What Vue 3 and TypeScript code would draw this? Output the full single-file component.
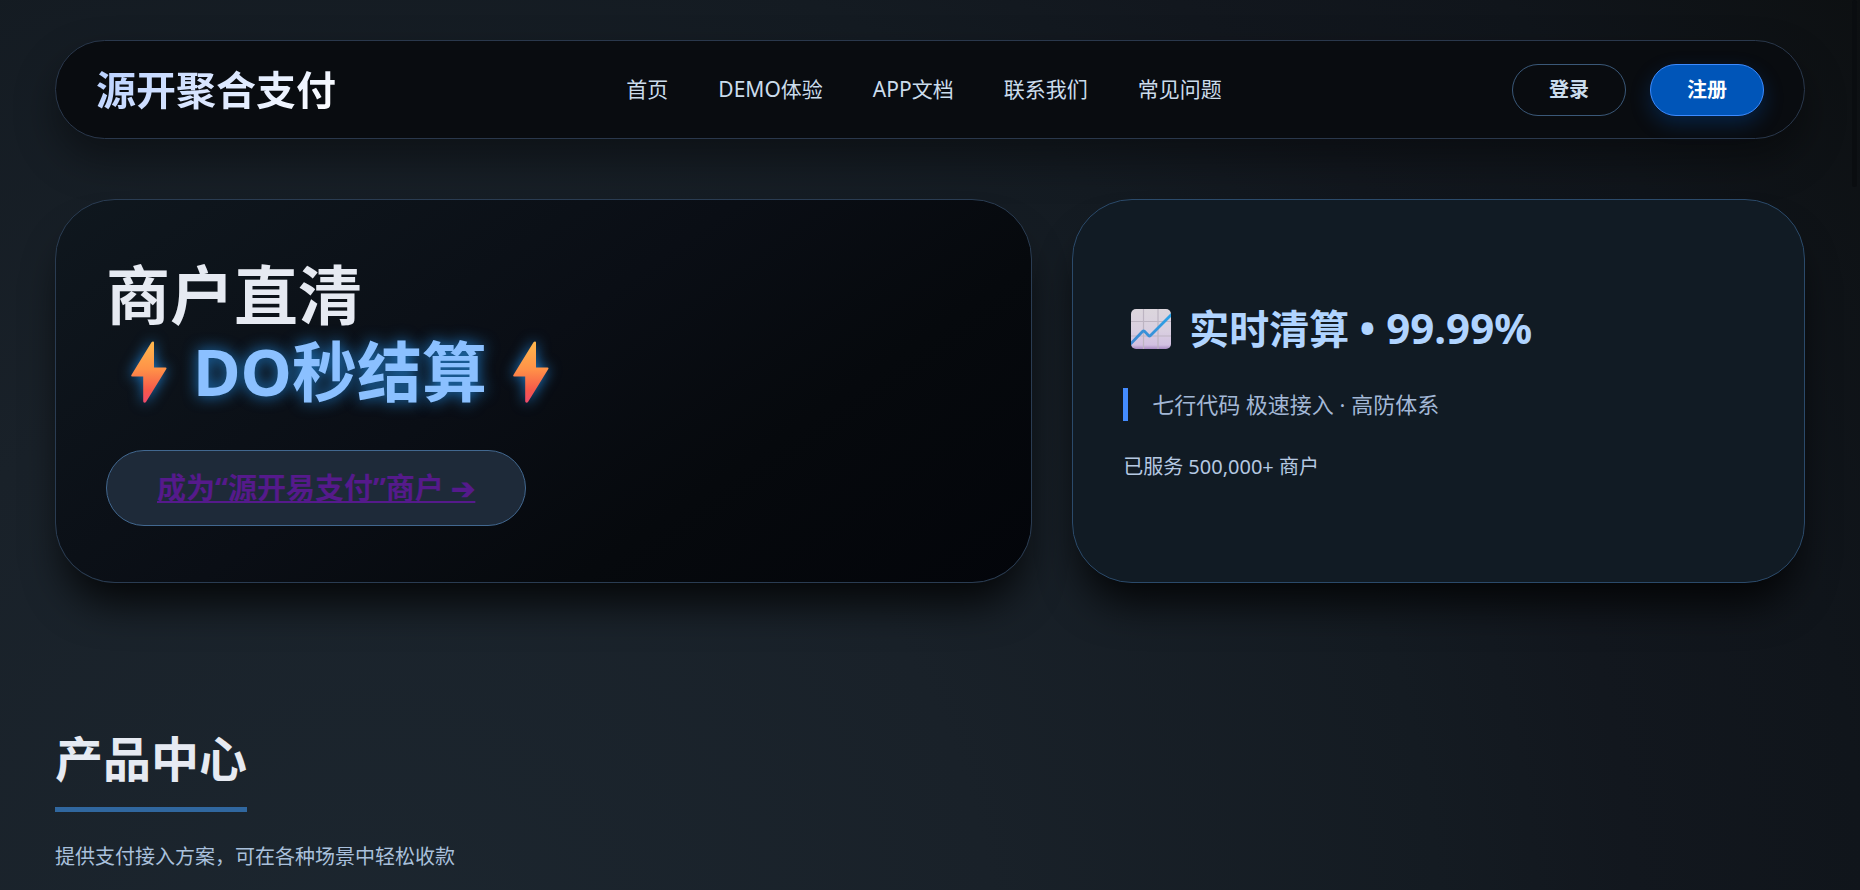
<script setup lang="ts">
interface NavItem {
  label: string
  href: string
}

const navItems: NavItem[] = [
  { label: '首页', href: '#home' },
  { label: 'DEMO体验', href: '#demo' },
  { label: 'APP文档', href: '#docs' },
  { label: '联系我们', href: '#contact' },
  { label: '常见问题', href: '#faq' },
]
</script>

<template>
  <div class="page">
    <header class="topbar">
      <div class="logo">源开聚合支付</div>
      <nav class="nav" aria-label="主导航">
        <a v-for="item in navItems" :key="item.label" class="nav-link" :href="item.href">{{ item.label }}</a>
      </nav>
      <div class="actions">
        <button type="button" class="btn">登录</button>
        <button type="button" class="btn btn-primary">注册</button>
      </div>
    </header>

    <main>
      <section class="hero">
        <div class="card card-main">
          <h1 class="title">
            <span class="title-line">商户直清</span>
            <span class="title-line glow">
              <svg class="bolt" viewBox="0 0 36 62" aria-hidden="true">
                <defs>
                  <linearGradient id="boltFill" x1="0" y1="0" x2="0" y2="1">
                    <stop offset="0" stop-color="#ffb84d" />
                    <stop offset="0.45" stop-color="#ff9248" />
                    <stop offset="0.8" stop-color="#f6584a" />
                    <stop offset="1" stop-color="#ee4a6c" />
                  </linearGradient>
                </defs>
                <path d="M20.500 1.200Q21 .4 22 .4Q23 .4 23 1.600V26.500H34.500Q36 26.500 35.300 28L15 61Q14.500 61.700 13.500 61.700Q12.200 61.700 12.200 60.300V35.500H1Q-.2 35.500 .4 34Z" fill="url(#boltFill)" />
              </svg>
              <span>DO秒结算</span>
              <svg class="bolt" viewBox="0 0 36 62" aria-hidden="true">
                <path d="M20.500 1.200Q21 .4 22 .4Q23 .4 23 1.600V26.500H34.500Q36 26.500 35.300 28L15 61Q14.500 61.700 13.500 61.700Q12.200 61.700 12.200 60.300V35.500H1Q-.2 35.500 .4 34Z" fill="url(#boltFill)" />
              </svg>
            </span>
          </h1>
          <a class="cta" href="#join">成为“源开易支付”商户 ➔</a>
        </div>

        <div class="card card-side">
          <h2 class="stat">
            <svg class="chart" viewBox="0 0 40 40" aria-hidden="true">
              <defs>
                <linearGradient id="chartFill" x1="0" y1="0" x2="0" y2="1">
                  <stop offset="0" stop-color="#dcd6dd" />
                  <stop offset="0.55" stop-color="#d9cfe0" />
                  <stop offset="0.9" stop-color="#d2c0e2" />
                  <stop offset="1" stop-color="#a98bc4" />
                </linearGradient>
                <linearGradient id="chartLine" x1="0" y1="1" x2="1" y2="0">
                  <stop offset="0" stop-color="#3f86cf" />
                  <stop offset="1" stop-color="#2ba3e8" />
                </linearGradient>
                <clipPath id="chartClip"><rect width="40" height="40" rx="5" /></clipPath>
              </defs>
              <g clip-path="url(#chartClip)">
                <rect width="40" height="40" fill="url(#chartFill)" />
                <path d="M12.500 0V40M27 0V40M0 12.500H40M0 27H40" stroke="#bdb4c2" stroke-width="1.200" fill="none" />
                <path d="M-1 35.500L11.500 22.500Q12.500 21.500 13.500 22.300L17.500 26.500Q18.500 27.500 19.500 26.500L41 5" stroke="url(#chartLine)" stroke-width="2.800" fill="none" />
              </g>
            </svg>
            <span>实时清算 <span class="stat-value">• 99.99%</span></span>
          </h2>
          <p class="quote">七行代码 极速接入 · 高防体系</p>
          <p class="served">已服务 500,000+ 商户</p>
        </div>
      </section>

      <section class="products">
        <h2 class="section-title">产品中心</h2>
        <p class="section-text">提供支付接入方案，可在各种场景中轻松收款</p>
      </section>
    </main>
    <div class="scroll-thumb" aria-hidden="true"></div>
  </div>
</template>

<style>
html,
body {
  background: #0d1013;
}
body {
  margin: 0;
}
</style>

<style scoped>
.page {
  box-sizing: border-box;
  min-height: 100vh;
  padding: 40px 55px 0;
  background: radial-gradient(circle at 20% 110%, #1c262f 0%, #192129 35%, #141b22 60%, #12171e 71%, #10151b 84%, #0d1012 100%);
  color: #e6eaf2;
  font-family: "Noto Sans", "Noto Sans CJK SC", sans-serif;
}
.topbar {
  display: flex;
  align-items: center;
  justify-content: space-between;
  padding: 23px 40px 22px;
  border: 1px solid #2a384c;
  border-radius: 60px;
  background: #090c10;
  box-shadow: 0 20px 40px rgba(0, 0, 0, 0.4);
}
.logo {
  background: linear-gradient(135deg, #b8d0ff, #ffffff);
  background-clip: text;
  color: transparent;
  font-size: 40px;
  font-weight: 700;
  line-height: 50px;
}
.nav {
  display: flex;
  gap: 50px;
}
.nav-link {
  padding-bottom: 2px;
  color: #cbdcec;
  font-size: 21px;
  line-height: 30px;
  text-decoration: none;
}
.actions {
  display: flex;
  gap: 24px;
}
.btn {
  padding: 10px 36px;
  border: 1px solid #3a5878;
  border-radius: 26px;
  background: transparent;
  color: #cbdcec;
  font: inherit;
  font-size: 20px;
  font-weight: 700;
  line-height: 30px;
}
.btn-primary {
  border-color: #3d8bff;
  background: #0055b8;
  box-shadow: 0 8px 20px rgba(0, 85, 184, 0.3);
  color: #fff;
}
.hero {
  display: grid;
  grid-template-columns: 4fr 3fr;
  gap: 40px;
  margin-top: 60px;
}
.card {
  box-sizing: border-box;
  min-height: 384px;
  padding: 50px;
  border: 1px solid #2a3c52;
  border-radius: 60px;
  box-shadow: 0 30px 40px -10px rgba(0, 0, 0, 0.8);
}
.card-main {
  background: linear-gradient(145deg, #0f171e 0%, #0a0e15 45%, #06090d 70%, #03050a 100%);
}
.title {
  margin: 6px 0 40px;
  font-size: 64px;
  font-weight: 700;
  line-height: 77px;
}
.title-line {
  display: block;
}
.glow {
  display: flex;
  align-items: center;
  gap: 26px;
  padding-left: 25px;
  color: #8bc0ff;
  font-size: 65px;
  text-shadow: 0 0 15px #1f7bc8;
}
.bolt {
  width: 36px;
  height: 62px;
  filter: drop-shadow(0 0 7px #1f7bc8);
}
.cta {
  display: inline-block;
  padding: 17px 50px;
  border: 1px solid #426890;
  border-radius: 38px;
  background: #1e2a39;
  color: #551a8b;
  font-size: 29px;
  font-weight: 700;
  line-height: 40px;
}
.card-side {
  display: flex;
  flex-direction: column;
  justify-content: center;
  border-color: #2b4a6a;
  background: #111b24;
}
.stat {
  display: flex;
  align-items: center;
  gap: 18px;
  margin: 0 0 31px;
  padding-left: 8px;
  color: #b0d4ff;
  font-size: 40px;
  font-weight: 700;
  line-height: 56px;
}
.stat-value {
  font-size: 42px;
}
.chart {
  width: 40px;
  height: 40px;
}
.quote {
  margin: 0 0 31px;
  padding-left: 24px;
  border-left: 5px solid #448cff;
  color: #a3b8d6;
  font-size: 22px;
  line-height: 33px;
}
.served {
  margin: 0;
  color: #b5c9e2;
  font-size: 20px;
  line-height: 30px;
}
.products {
  margin-top: 140px;
}
.section-title {
  width: fit-content;
  margin: 0;
  padding-bottom: 12px;
  border-bottom: 5px solid #30679f;
  font-size: 48px;
  font-weight: 700;
  line-height: 72px;
}
.section-text {
  margin: 30px 0 0;
  color: #a9c0dc;
  font-size: 20px;
  line-height: 30px;
}
.scroll-thumb {
  position: fixed;
  top: 0;
  right: 3px;
  width: 5px;
  height: 187px;
  border-radius: 3px;
  background: #0a0d10;
}
</style>
